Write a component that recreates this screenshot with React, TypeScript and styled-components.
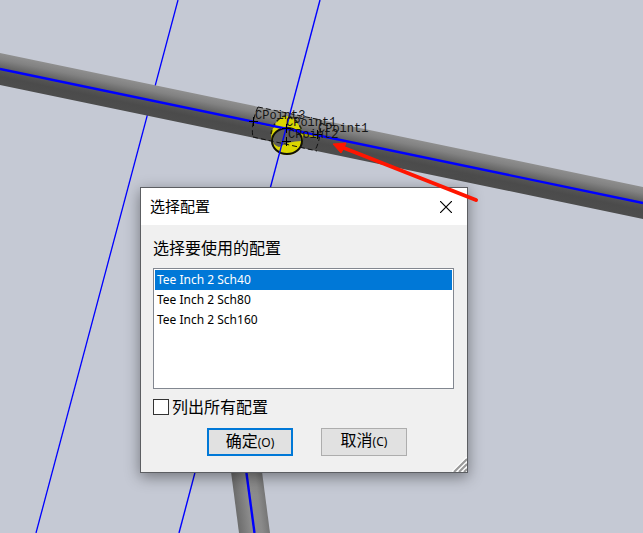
import React from "react";
import styled, { createGlobalStyle } from "styled-components";

const GlobalStyle = createGlobalStyle`
  *, *::before, *::after { box-sizing: border-box; }
  body {
    margin: 0;
    background: #c5c9d4;
    font-family: "Noto Sans", "Noto Sans CJK SC", sans-serif;
    color: #000;
  }
`;

const Viewport = styled.main`
  position: relative;
  min-height: 100vh;
  overflow: hidden;
  background: #c5c9d4;
`;

const Scene = styled.svg`
  position: absolute;
  inset: 0;
  width: 100%;
  height: 100%;
  pointer-events: none;
`;

const PointLabel = styled.text`
  font-family: "Liberation Mono", monospace;
  font-size: 12px;
  fill: #141414;
`;

const Dialog = styled.section`
  position: absolute;
  left: 140px;
  top: 187px;
  width: 328px;
  border: 1px solid #5c5e62;
  background: #f0f0f0;
  box-shadow: 0 4px 14px rgba(0, 0, 0, 0.42);
`;

const TitleBar = styled.header`
  display: flex;
  align-items: center;
  justify-content: space-between;
  height: 37px;
  padding: 0 8px 0 9px;
  background: #fff;
`;

const Title = styled.h1`
  margin: 0;
  padding-bottom: 2px;
  font-size: 15px;
  line-height: 24px;
  font-weight: 400;
`;

const CloseButton = styled.button`
  display: grid;
  place-items: center;
  width: 26px;
  height: 26px;
  padding: 0;
  border: 0;
  background: transparent;
`;

const Content = styled.form`
  display: flex;
  flex-direction: column;
  padding: 11px 13px 16px 12px;
`;

const ListLabel = styled.label`
  margin-bottom: 8px;
  font-size: 16px;
  line-height: 24px;
`;

const ConfigList = styled.select`
  appearance: none;
  width: 100%;
  height: 121px;
  padding: 1px;
  border: 1px solid #828790;
  border-radius: 0;
  outline: 0;
  overflow: hidden;
  background: #fff;
  font-family: inherit;
  font-size: 12px;
`;

const ConfigOption = styled.option`
  height: 20px;
  min-height: 20px;
  padding: 1px 2px 0;
  border-radius: 0;
  line-height: 20px;
  color: #000;

  &:checked {
    background: #0078d7 linear-gradient(#0078d7, #0078d7);
    color: #fff;
    -webkit-text-fill-color: #fff;
  }
`;

const CheckLabel = styled.label`
  display: flex;
  align-items: center;
  gap: 3px;
  margin: 6px 0 9px;
  font-size: 16px;
  line-height: 24px;
`;

const CheckBox = styled.input`
  appearance: none;
  width: 16px;
  height: 16px;
  margin: 0;
  border: 1px solid #333;
  background: #fff;

  &:checked {
    background: #0078d7;
  }
`;

const Actions = styled.div`
  display: flex;
  justify-content: center;
  gap: 28px;
  padding-left: 7px;
`;

const ActionButton = styled.button<{ $primary?: boolean }>`
  width: 86px;
  height: 28px;
  padding: 0 0 2px;
  border: ${(p) => (p.$primary ? "2px solid #0078d7" : "1px solid #adadad")};
  background: #e1e1e1;
  color: #000;
  font-family: inherit;
  font-size: 16px;
  line-height: 22px;
`;

const AccessKey = styled.span`
  font-size: 12px;
`;

const ResizeGrip = styled.svg`
  position: absolute;
  right: 0;
  bottom: 0;
`;

const configurations = ["Tee Inch 2 Sch40", "Tee Inch 2 Sch80", "Tee Inch 2 Sch160"];

function Model() {
  return (
    <Scene viewBox="0 0 643 533" preserveAspectRatio="xMinYMin slice" aria-hidden="true">
      <defs>
        <linearGradient id="pipe" gradientUnits="userSpaceOnUse" x1="0" y1="53" x2="-6.3" y2="83.3">
          <stop offset="0" stopColor="#8f8f8f" />
          <stop offset="0.2" stopColor="#828282" />
          <stop offset="0.6" stopColor="#525252" />
          <stop offset="0.75" stopColor="#4b4b4b" />
          <stop offset="1" stopColor="#4d4d4d" />
        </linearGradient>
        <linearGradient id="branch" gradientUnits="userSpaceOnUse" x1="231" y1="472" x2="262" y2="468">
          <stop offset="0" stopColor="#6c6c6c" />
          <stop offset="0.45" stopColor="#8e8e8e" />
          <stop offset="0.75" stopColor="#8a8a8a" />
          <stop offset="1" stopColor="#757575" />
        </linearGradient>
      </defs>

      <path d="M178 0L36 533" stroke="#0000ff" strokeWidth="1.3" />
      <path d="M221 395L252 395L270 533L239 533Z" fill="url(#branch)" />
      <path d="M236 395L254.5 533" stroke="#0000ff" strokeWidth="2.4" />
      <path d="M0 53L643 187L643 219L0 85Z" fill="url(#pipe)" />

      <path d="M253 121L274 125L274 128L253 123Z" fill="#8d8800" />
      <path d="M298 130L318 134L318 138L298 135Z" fill="#a39d00" />
      <path d="M271 139C271 127 279 116 286 116C294 116 303 128 303 139C302 149 296 155 287 155C278 155 271 149 271 139Z" fill="#dad600" />
      <path
        d="M271 134C272 126 279 116 286 116C294 116 301 125 303 134"
        fill="none"
        stroke="#26260a"
        strokeWidth="1.5"
        strokeDasharray="4 3"
      />
      <path d="M273 141C273 133 279 128 287 128C295 128 301 133 301 141C293 141 286 143 279 147C276 146 273 144 273 141Z" fill="#5d5d5d" />
      <ellipse cx="287" cy="141" rx="15" ry="13" fill="none" stroke="#101008" strokeWidth="2" />

      <path
        d="M258 107L321 120M258 107C254 115 251 128 253 137M253 137L317 151"
        fill="none"
        stroke="#111"
        strokeDasharray="5 3"
      />
      <path d="M321 120C321 132 319 144 315 150" fill="none" stroke="#111" strokeDasharray="5 3" />
      <path d="M0 69L643 203" stroke="#0000ff" strokeWidth="2.4" />
      <path d="M320 0L179 533" stroke="#0000ff" strokeWidth="1.4" />
      <path d="M249 121.5H258M253.5 117V126M282 128.5H291M286.5 124V133M313 134.5H322M317.5 130V139M282 141.5H291M286.5 137V146" stroke="#000" />
      <PointLabel x="255" y="119">CPoint3</PointLabel>
      <PointLabel x="286" y="126">CPoint1</PointLabel>
      <PointLabel x="288" y="138">CPoint2</PointLabel>
      <PointLabel x="318" y="132">CPoint1</PointLabel>
    </Scene>
  );
}

function PointerArrow() {
  return (
    <Scene viewBox="0 0 643 533" preserveAspectRatio="xMinYMin slice" aria-hidden="true">
      <path d="M476 200L344 148" stroke="#ff1500" strokeWidth="4" strokeLinecap="round" />
      <path d="M333 144L346 143L344 148L341 153Z" fill="#ff1500" stroke="#ff1500" strokeLinejoin="round" />
    </Scene>
  );
}

export default function App() {
  return (
    <>
      <GlobalStyle />
      <Viewport>
        <Model />
        <Dialog role="dialog" aria-labelledby="dialog-title">
          <TitleBar>
            <Title id="dialog-title">选择配置</Title>
            <CloseButton type="button" aria-label="关闭">
              <svg width="12" height="12" viewBox="0 0 12 12" aria-hidden="true">
                <path d="M0 0L12 12M12 0L0 12" stroke="#000" strokeWidth="1.2" />
              </svg>
            </CloseButton>
          </TitleBar>
          <Content onSubmit={(e) => e.preventDefault()}>
            <ListLabel htmlFor="configuration">选择要使用的配置</ListLabel>
            <ConfigList id="configuration" size={6} defaultValue={configurations[0]}>
              {configurations.map((name) => (
                <ConfigOption key={name} value={name}>
                  {name}
                </ConfigOption>
              ))}
            </ConfigList>
            <CheckLabel>
              <CheckBox type="checkbox" />
              列出所有配置
            </CheckLabel>
            <Actions>
              <ActionButton type="submit" $primary>
                确定<AccessKey>(O)</AccessKey>
              </ActionButton>
              <ActionButton type="button">
                取消<AccessKey>(C)</AccessKey>
              </ActionButton>
            </Actions>
          </Content>
          <ResizeGrip width="15" height="15" viewBox="0 0 15 15" aria-hidden="true">
            <path d="M0 15L15 0M5 15L15 5M10 15L15 10" stroke="#fff" strokeWidth="1.5" />
            <path d="M2 15L15 2M7 15L15 7M12 15L15 12" stroke="#999" strokeWidth="2" />
          </ResizeGrip>
        </Dialog>
        <PointerArrow />
      </Viewport>
    </>
  );
}
